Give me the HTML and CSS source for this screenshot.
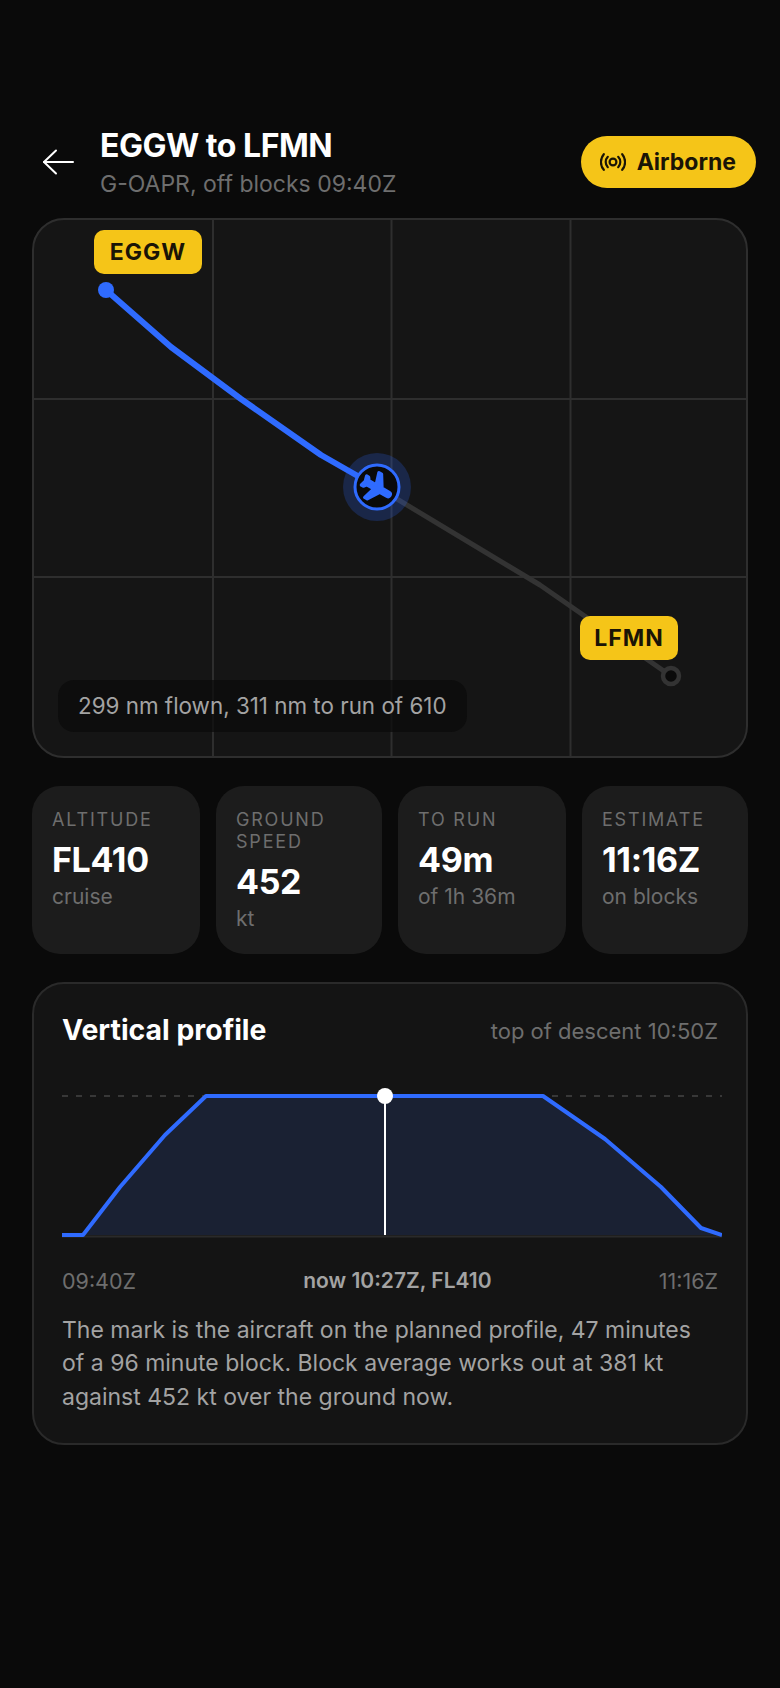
FILE: index.html
```html
<!DOCTYPE html>
<html lang="en">
<head>
    <meta charset="UTF-8">
    <meta name="viewport" content="width=device-width, initial-scale=1.0">
    <title>EGGW to LFMN</title>
    <link rel="stylesheet" href="styles.css">
</head>
<body>
    <div class="page">
        <header class="top-bar">
            <svg class="back-icon" width="32" height="26" viewBox="0 0 32 26" fill="none" stroke="#fff" stroke-width="2" stroke-linecap="round" stroke-linejoin="round">
                <path d="M31 13H2"/>
                <path d="M14 1.500 2 13l12 11.500"/>
            </svg>
            <div class="flight-title">
                <h1>EGGW to LFMN</h1>
                <p>G-OAPR, off blocks 09:40Z</p>
            </div>
            <div class="status-pill">
                <svg width="26" height="20" viewBox="0 0 26 20" fill="none" stroke="#1a1406" stroke-width="2.200" stroke-linecap="round">
                    <circle cx="13" cy="10" r="3.400"/>
                    <path d="M7.800 4.800a7.500 7.500 0 0 0 0 10.400"/>
                    <path d="M18.200 4.800a7.500 7.500 0 0 1 0 10.400"/>
                    <path d="M3.800 2.200a12 12 0 0 0 0 15.600"/>
                    <path d="M22.200 2.200a12 12 0 0 1 0 15.600"/>
                </svg>
                <span>Airborne</span>
            </div>
        </header>

        <section class="route-map">
            <svg class="route-lines" width="712" height="536" viewBox="0 0 712 536" fill="none">
                <path d="M179 0V536M357.500 0V536M536.500 0V536M0 179H712M0 357H712" stroke="#2e2e2e" stroke-width="2"/>
                <polyline points="343,267 506,365 637,456" stroke="#333" stroke-width="5" stroke-linecap="round" stroke-linejoin="round"/>
                <polyline points="72,70 137,127 207,179 287,235 343,267" stroke="#2f6bff" stroke-width="6" stroke-linecap="round" stroke-linejoin="round"/>
                <circle cx="72" cy="70" r="8" fill="#2f6bff"/>
                <circle cx="637" cy="456" r="8" fill="#0a0a0a" stroke="#333" stroke-width="4.500"/>
                <circle cx="343" cy="267" r="34" fill="#2f6bff" fill-opacity="0.22"/>
                <circle cx="343" cy="267" r="22" fill="#0a0a0a" stroke="#2f6bff" stroke-width="3"/>
                <path transform="translate(343 268) rotate(120) scale(1.500) translate(-11.500 -12)" fill="#2f6bff" stroke="#2f6bff" stroke-width="2.200" stroke-linejoin="round" d="M21 16v-2l-8-5V3.500c0-.83-.67-1.500-1.500-1.500S10 2.670 10 3.500V9l-8 5v2l8-2.500V19l-2 1.500V22l3.500-1 3.500 1v-1.500L13 19v-5.500l8 2.500z"/>
            </svg>
            <div class="airport-tag tag-from">EGGW</div>
            <div class="airport-tag tag-to">LFMN</div>
            <div class="map-caption">299 nm flown, 311 nm to run of 610</div>
        </section>

        <section class="stat-row">
            <div class="stat-card">
                <div class="stat-label">ALTITUDE</div>
                <div class="stat-value">FL410</div>
                <div class="stat-note">cruise</div>
            </div>
            <div class="stat-card">
                <div class="stat-label">GROUND SPEED</div>
                <div class="stat-value">452</div>
                <div class="stat-note">kt</div>
            </div>
            <div class="stat-card">
                <div class="stat-label">TO RUN</div>
                <div class="stat-value">49m</div>
                <div class="stat-note">of 1h 36m</div>
            </div>
            <div class="stat-card">
                <div class="stat-label">ESTIMATE</div>
                <div class="stat-value">11:16Z</div>
                <div class="stat-note">on blocks</div>
            </div>
        </section>

        <section class="profile-card">
            <div class="profile-head">
                <h2>Vertical profile</h2>
                <span>top of descent 10:50Z</span>
            </div>
            <svg class="profile-chart" width="660" height="152" viewBox="0 0 660 152" fill="none">
                <line x1="0" y1="9" x2="660" y2="9" stroke="#444" stroke-width="1.500" stroke-dasharray="6 8"/>
                <polygon points="21,148 58,100 103,48 144,9 481,9 543,52 599,100 639,141 660,148" fill="#1a2133"/>
                <line x1="0" y1="149.500" x2="660" y2="149.500" stroke="#2a2a2a" stroke-width="2"/>
                <polyline points="0,148 21,148 58,100 103,48 144,9 481,9 543,52 599,100 639,141 660,148" stroke="#2f6bff" stroke-width="4" stroke-linejoin="round"/>
                <line x1="323" y1="9" x2="323" y2="148" stroke="#fff" stroke-width="2"/>
                <circle cx="323" cy="9" r="8" fill="#fff"/>
            </svg>
            <div class="profile-times">
                <span>09:40Z</span>
                <strong>now 10:27Z, FL410</strong>
                <span>11:16Z</span>
            </div>
            <p class="profile-text">The mark is the aircraft on the planned profile, 47 minutes of a 96 minute block. Block average works out at 381 kt against 452 kt over the ground now.</p>
        </section>
    </div>
</body>
</html>
```

FILE: styles.css
```css
* {
    box-sizing: border-box;
}

body {
    margin: 0;
    background-color: #0a0a0a;
    color: #fff;
    font-family: Inter, "Liberation Sans", sans-serif;
}

.page {
    width: 780px;
    height: 1688px;
    padding: 128px 32px 0;
    overflow: hidden;
}

/* header */
.top-bar {
    display: flex;
    align-items: flex-start;
    height: 72px;
    margin: 0 -8px 18px 10px;
}

.back-icon {
    flex: none;
    margin-right: 26px;
    margin-top: 21px;
}

.flight-title {
    flex: 1;
}

.flight-title h1 {
    margin: 0;
    font-size: 32px;
    line-height: 36px;
    font-weight: 700;
    letter-spacing: -0.48px;
}

.flight-title p {
    margin: 5px 0 0;
    font-size: 23px;
    line-height: 30px;
    color: #6e6e6e;
}

.status-pill {
    display: flex;
    align-items: center;
    gap: 11px;
    height: 52px;
    padding: 0 20px 0 19px;
    margin-top: 8px;
    border-radius: 26px;
    background-color: #f5c518;
    color: #1a1406;
    font-size: 23px;
    font-weight: 700;
}

/* map */
.route-map {
    position: relative;
    height: 540px;
    border: 2px solid #2e2e2e;
    border-radius: 32px;
    overflow: hidden;
    background-color: #151515;
}

.route-lines {
    position: absolute;
    left: 0;
    top: 0;
}

.airport-tag {
    position: absolute;
    height: 44px;
    border-radius: 10px;
    background-color: #f5c518;
    color: #1a1406;
    font-size: 23px;
    line-height: 44px;
    font-weight: 700;
    letter-spacing: 1px;
    text-align: center;
}

.tag-from {
    left: 60px;
    top: 10px;
    width: 108px;
}

.tag-to {
    left: 546px;
    top: 396px;
    width: 98px;
}

.map-caption {
    position: absolute;
    left: 24px;
    top: 460px;
    height: 52px;
    padding: 0 20px;
    border-radius: 16px;
    background-color: rgba(10, 10, 10, 0.7);
    color: #a3a3a3;
    font-size: 22.400px;
    line-height: 52px;
}

/* stat cards */
.stat-row {
    display: grid;
    grid-template-columns: 168px 166px 168px 166px;
    gap: 16px;
    margin-top: 28px;
}

.stat-card {
    height: 168px;
    padding: 23px 20px;
    border-radius: 28px;
    background-color: #1c1c1c;
}

.stat-label {
    font-size: 18px;
    line-height: 22px;
    letter-spacing: 1.800px;
    color: #6e6e6e;
}

.stat-value {
    margin-top: 7px;
    font-size: 34px;
    line-height: 44px;
    font-weight: 700;
    letter-spacing: -0.340px;
}

.stat-note {
    font-size: 21px;
    line-height: 30px;
    color: #6e6e6e;
}

/* profile */
.profile-card {
    margin-top: 28px;
    height: 463px;
    padding: 28px 28px 0;
    border: 2px solid #2a2a2a;
    border-radius: 32px;
    background-color: #141414;
}

.profile-head {
    display: flex;
    justify-content: space-between;
    align-items: center;
    height: 36px;
}

.profile-head h2 {
    margin: -2px 0 0;
    font-size: 28.400px;
    font-weight: 700;
}

.profile-head span {
    margin-top: 2px;
    font-size: 22px;
    color: #6e6e6e;
}

.profile-chart {
    display: block;
    margin-top: 39px;
}

.profile-times {
    display: flex;
    justify-content: space-between;
    margin-top: 27px;
    font-size: 21.500px;
    line-height: 30px;
    color: #6e6e6e;
}

.profile-times strong {
    font-size: 21px;
    font-weight: 600;
    color: #a3a3a3;
}

.profile-text {
    margin: 18px 0 0;
    font-size: 23px;
    line-height: 33.350px;
    color: #a3a3a3;
}
```
